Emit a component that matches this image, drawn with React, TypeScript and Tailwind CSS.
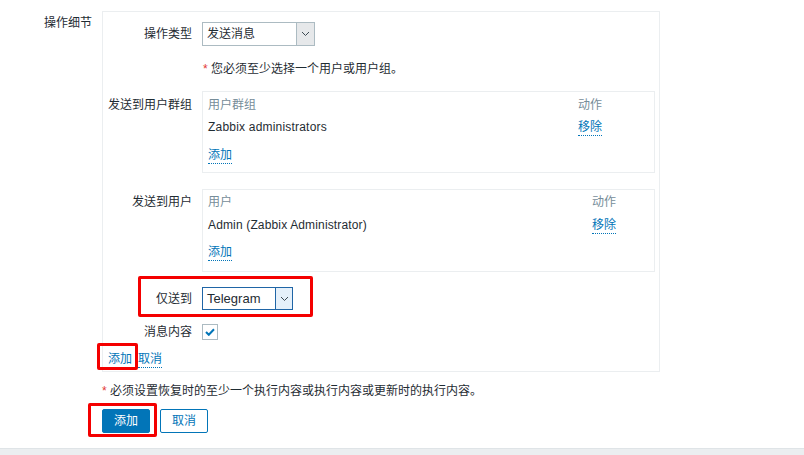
import React from 'react'

const font = "font-['Liberation_Sans','Noto_Sans_CJK_SC',sans-serif]"

const Chevron = () => (
    <svg width="9" height="6" viewBox="0 0 9 6" fill="none">
        <path d="M1 1l3.5 3.5L8 1" stroke="#3d4a52" strokeWidth="1" />
    </svg>
)

const Link = ({ children }: { children: React.ReactNode }) => (
    <span className="text-[#0275b8] border-b border-dotted border-[#0275b8] leading-[14px] pb-[1px]">{children}</span>
)

const Label = ({ children }: { children: React.ReactNode }) => (
    <div className="w-[89px] shrink-0 text-right pr-0 text-[#1f2c33]">{children}</div>
)

const App = () => {
    return (
        <div className={`relative w-[804px] h-[455px] bg-white text-[12px] leading-[14px] text-[#1f2c33] ${font} flex flex-col`}>
            <div className="flex pt-[11px]">
                <div className="w-[92px] text-right pt-[5px]">操作细节</div>
                <div className="ml-[10px] w-[558px] h-[361px] border border-[#ebeef0] flex flex-col">
                    {/* 操作类型 */}
                    <div className="flex items-center gap-[10px] mt-[10px]">
                        <Label>操作类型</Label>
                        <div className="flex w-[113px] h-[24px] border border-[#acbbc2] bg-white">
                            <div className="flex-1 pl-[4px] flex items-center">发送消息</div>
                            <div className="w-[18px] bg-[#e6e8ea] border-l border-[#acbbc2] flex items-center justify-center">
                                <Chevron />
                            </div>
                        </div>
                    </div>
                    <div className="ml-[100px] mt-[16px]">
                        <span className="text-[#e33734]">*</span> 您必须至少选择一个用户或用户组。
                    </div>
                    {/* 发送到用户群组 */}
                    <div className="flex gap-[10px] mt-[15px]">
                        <Label><div className="pt-[7px]">发送到用户群组</div></Label>
                        <div className="w-[453px] border border-[#ebeef0] px-[5px] pt-[6px] pb-[10px] flex flex-col">
                            <div className="grid grid-cols-[1fr_71px] text-[#768d99]">
                                <span>用户群组</span><span>动作</span>
                            </div>
                            <div className="grid grid-cols-[1fr_71px] mt-[8px]">
                                <span className="tracking-[0.2px]">Zabbix administrators</span><span><Link>移除</Link></span>
                            </div>
                            <div className="mt-[14px] h-[14px]"><Link>添加</Link></div>
                        </div>
                    </div>
                    {/* 发送到用户 */}
                    <div className="flex gap-[10px] mt-[16px]">
                        <Label><div className="pt-[6px]">发送到用户</div></Label>
                        <div className="w-[453px] border border-[#ebeef0] px-[5px] pt-[5px] pb-[12px] flex flex-col">
                            <div className="grid grid-cols-[1fr_57px] text-[#768d99]">
                                <span>用户</span><span>动作</span>
                            </div>
                            <div className="grid grid-cols-[1fr_57px] mt-[9px]">
                                <span className="tracking-[0.15px]">Admin (Zabbix Administrator)</span><span><Link>移除</Link></span>
                            </div>
                            <div className="mt-[13px] h-[14px]"><Link>添加</Link></div>
                        </div>
                    </div>
                    {/* 仅送到 */}
                    <div className="flex items-center gap-[10px] mt-[15px]">
                        <Label>仅送到</Label>
                        <div className="flex w-[91px] h-[23px] border border-[#1f65a6] bg-white">
                            <div className="flex-1 pl-[4px] flex items-center text-[13px]">Telegram</div>
                            <div className="w-[17px] bg-[#e5f0fa] border-l border-[#1f65a6] flex items-center justify-center">
                                <Chevron />
                            </div>
                        </div>
                    </div>
                    {/* 消息内容 */}
                    <div className="flex items-center gap-[10px] mt-[14px]">
                        <Label>消息内容</Label>
                        <div className="w-[16px] h-[16px] border border-[#acbbc2] bg-white flex items-center justify-center">
                            <svg width="10" height="8" viewBox="0 0 10 8" fill="none">
                                <path d="M1 4l2.8 2.8L9 1.2" stroke="#0275b8" strokeWidth="2" />
                            </svg>
                        </div>
                    </div>
                    <div className="flex gap-[6px] pl-[5px] mt-[12px]">
                        <Link>添加</Link><Link>取消</Link>
                    </div>
                </div>
            </div>
            <div className="ml-[102px] mt-[12px]">
                <span className="text-[#e33734]">*</span> 必须设置恢复时的至少一个执行内容或执行内容或更新时的执行内容。
            </div>
            <div className="flex gap-[10px] ml-[102px] mt-[11px]">
                <button className="w-[48px] h-[24px] bg-[#0275b8] text-white border border-[#0275b8] rounded-[2px]">添加</button>
                <button className="w-[48px] h-[24px] bg-white text-[#0275b8] border border-[#0275b8] rounded-[2px]">取消</button>
            </div>
            <div className="mt-auto h-[7px] bg-[#ebeef0] border-t border-[#dfe4e7]" />

            {/* red annotation boxes */}
            <div className="absolute left-[138px] top-[276px] w-[175px] h-[41px] border-[3px] border-[#f40000] rounded-[2px]" />
            <div className="absolute left-[97px] top-[343px] w-[41px] h-[27px] border-[3px] border-[#f40000] rounded-[2px]" />
            <div className="absolute left-[88px] top-[403px] w-[69px] h-[34px] border-[3px] border-[#f40000] rounded-[2px]" />
        </div>
    )
}

export default App
